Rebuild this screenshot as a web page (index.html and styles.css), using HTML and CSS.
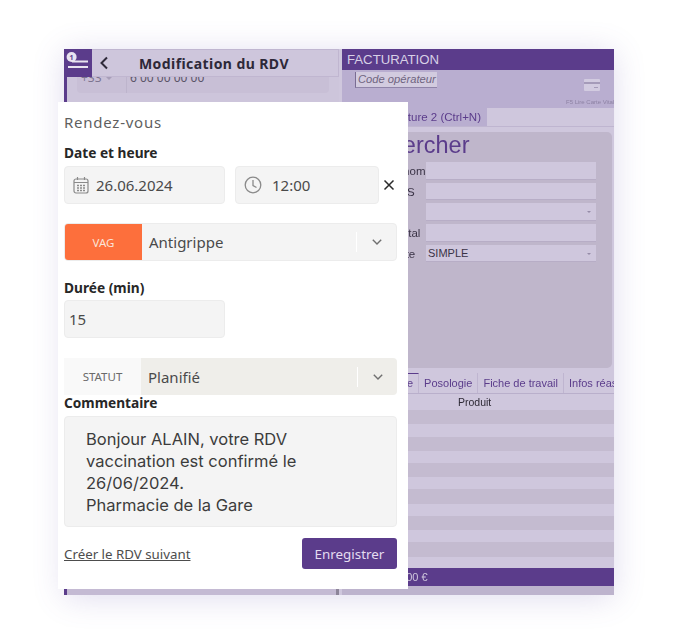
FILE: index.html
```html
<!DOCTYPE html>
<html lang="fr">
<head>
    <meta charset="UTF-8">
    <title>Modification du RDV</title>
    <link rel="stylesheet" href="styles.css">
</head>
<body>
<div class="app">
    <div class="left-pane">
        <div class="rdv-head">
            <div class="rdv-head__menu">
                <svg width="28" height="28" viewBox="0 0 28 28">
                    <circle cx="7.600" cy="8" r="5" fill="#e8e3f0"/>
                    <text x="7.600" y="10.500" class="rdv-head__count">1</text>
                    <path d="M8 12.500H24M4 18H24" stroke="#e8e3f0" stroke-width="2" fill="none"/>
                </svg>
            </div>
            <svg class="rdv-head__back" width="10" height="14" viewBox="0 0 10 14">
                <path d="M8 1.500 2.500 7 8 12.500" stroke="#2f2a3a" stroke-width="2" fill="none"/>
            </svg>
            <span class="rdv-head__title">Modification du RDV</span>
        </div>
        <div class="phone-row">
            <span class="phone-row__code">+33</span>
            <span class="phone-row__number">6 00 00 00 00</span>
        </div>
        <div class="left-pane__foot"></div>
    </div>

    <div class="right-pane">
        <div class="bill-head">FACTURATION</div>
        <div class="bill-tools">
            <span class="bill-tools__code">Code opérateur</span>
            <div class="bill-tools__card">
                <svg width="16" height="12" viewBox="0 0 16 12">
                    <rect width="16" height="12" rx="1" fill="#d2cbe0"/>
                    <rect y="3" width="16" height="2" fill="#a59bb9"/>
                    <rect x="10" y="8" width="4" height="1" fill="#a59bb9"/>
                </svg>
                <span>F5 Lire Carte Vitale</span>
            </div>
        </div>
        <div class="bill-tabs">
            <span class="bill-tabs__item">Facture 2 (Ctrl+N)</span>
        </div>
        <div class="search-card">
            <div class="search-card__title">Rechercher</div>
            <div class="search-form">
                <span class="search-form__label">Nom prénom</span>
                <span class="search-form__field"></span>
                <span class="search-form__label">N° de NSS</span>
                <span class="search-form__field"></span>
                <span class="search-form__label"></span>
                <span class="search-form__field search-form__field--select"></span>
                <span class="search-form__label">Code postal</span>
                <span class="search-form__field"></span>
                <span class="search-form__label">Type vente</span>
                <span class="search-form__field search-form__field--select">SIMPLE</span>
            </div>
        </div>
        <div class="line-tabs">
            <span class="line-tabs__item line-tabs__item--active">Ligne</span>
            <span class="line-tabs__item">Posologie</span>
            <span class="line-tabs__item">Fiche de travail</span>
            <span class="line-tabs__item">Infos réassort</span>
        </div>
        <div class="line-table__head">Produit</div>
        <div class="line-table"></div>
        <div class="total-bar">0,00 €</div>
        <div class="right-pane__foot"></div>
    </div>

    <div class="rdv-modal">
        <div class="rdv-modal__title">Rendez-vous</div>

        <div class="field-label field-label--date">Date et heure</div>
        <div class="date-row">
            <div class="input-box input-box--date">
                <svg width="16" height="18" viewBox="0 0 16 18" fill="none" stroke="#8a8a8a" stroke-width="1.200">
                    <rect x="1" y="3" width="14" height="14" rx="2"/>
                    <path d="M1 6.500H15M4.500 1V4M11.500 1V4"/>
                    <path d="M4 9.500H6M7 9.500H9M10 9.500H12M4 12H6M7 12H9M10 12H12M4 14.500H6M7 14.500H9M10 14.500H12" stroke-width="1.300"/>
                </svg>
                <span>26.06.2024</span>
            </div>
            <div class="input-box input-box--time">
                <svg width="18" height="18" viewBox="0 0 18 18" fill="none" stroke="#8a8a8a" stroke-width="1.300">
                    <circle cx="9" cy="9" r="7.800"/>
                    <path d="M9 4V9.500L12.500 11.500"/>
                </svg>
                <span>12:00</span>
            </div>
            <svg class="date-row__clear" width="12" height="12" viewBox="0 0 12 12">
                <path d="M1.500 1.500 10.500 10.500M10.500 1.500 1.500 10.500" stroke="#2b2b2b" stroke-width="1.500" fill="none"/>
            </svg>
        </div>

        <div class="select-box select-box--type">
            <span class="select-box__tag select-box__tag--vag">VAG</span>
            <span class="select-box__value">Antigrippe</span>
            <span class="select-box__arrow">
                <svg width="10" height="6" viewBox="0 0 10 6"><path d="M.8 .8 5 5 9.200 .8" stroke="#6f6f6f" stroke-width="1.400" fill="none"/></svg>
            </span>
        </div>

        <div class="field-label field-label--duration">Durée (min)</div>
        <div class="input-box input-box--duration">15</div>

        <div class="select-box select-box--status">
            <span class="select-box__tag select-box__tag--status">STATUT</span>
            <span class="select-box__value">Planifié</span>
            <span class="select-box__arrow">
                <svg width="10" height="6" viewBox="0 0 10 6"><path d="M.8 .8 5 5 9.200 .8" stroke="#6f6f6f" stroke-width="1.400" fill="none"/></svg>
            </span>
        </div>

        <div class="field-label field-label--comment">Commentaire</div>
        <div class="comment-box">
            Bonjour ALAIN, votre RDV<br>
            vaccination est confirmé le<br>
            26/06/2024.<br>
            Pharmacie de la Gare
        </div>

        <div class="rdv-modal__foot">
            <a href="#" class="next-link">Créer le RDV suivant</a>
            <button class="save-btn">Enregistrer</button>
        </div>
    </div>
</div>
</body>
</html>
```

FILE: styles.css
```css
html,
body {
    margin: 0;
    background: #fff;
}

body {
    padding: 49px 0 0 64px;
    height: 636px;
    box-sizing: border-box;
    overflow: hidden;
}

.app {
    position: relative;
    display: flex;
    width: 550px;
    height: 546px;
    background: #cfc7dd;
    box-shadow: 0 3px 30px rgba(100, 80, 170, 0.2);
    filter: blur(0.45px);
}

/* left pane, mostly hidden by the modal */
.left-pane {
    display: flex;
    flex-direction: column;
    width: 275px;
    border-left: 3px solid #5b3c8b;
    box-sizing: border-box;
    background: #cdc5db;
}

.rdv-head {
    position: relative;
    z-index: 1;
    display: flex;
    align-items: center;
    flex: none;
    height: 28px;
    margin-left: -3px;
    border: 1px solid #c0b6d0;
    border-left: 0;
    box-sizing: border-box;
    background: #cec6dc;
}

.rdv-head__menu {
    width: 28px;
    height: 28px;
    background: #5b3c8b;
    flex: none;
}

.rdv-head__count {
    font: 700 7px "Noto Sans", sans-serif;
    fill: #5b3c8b;
    text-anchor: middle;
}

.rdv-head__back {
    margin-left: 7px;
}

.rdv-head__title {
    margin-left: 30px;
    font: 700 14px "Noto Sans", sans-serif;
    letter-spacing: 0.42px;
    color: #2d2838;
}

.phone-row {
    display: flex;
    flex: none;
    height: 26px;
    margin: -10px 10px 0 10px;
    padding-top: 3px;
    box-sizing: border-box;
    background: #c8bfd6;
    border-radius: 0 0 4px 4px;
    font: 12px/16px "Noto Sans", sans-serif;
    color: #5c5569;
    overflow: hidden;
}

.phone-row__code {
    position: relative;
    width: 50px;
    padding-left: 4px;
    box-sizing: border-box;
    border-right: 1px solid #bdb4cc;
    color: #7d7590;
}

.phone-row__code::after {
    content: "";
    position: absolute;
    right: 14px;
    top: 7px;
    border: 3px solid transparent;
    border-top-color: #a79eb8;
}

.phone-row__number {
    padding-left: 3px;
}

.left-pane__foot {
    margin-top: auto;
    height: 6px;
    background: #c4bad3;
    border-right: 3px solid #8d8599;
}

/* right pane */
.right-pane {
    display: flex;
    flex-direction: column;
    width: 272px;
    margin-left: 3px;
    background: #cfc7dd;
    font-family: "Liberation Sans", sans-serif;
    overflow: hidden;
}

.bill-head {
    height: 21px;
    padding-left: 5px;
    background: #5b3c8b;
    font-size: 13.200px;
    line-height: 21px;
    color: #d8d0e6;
}

.bill-tools {
    display: flex;
    justify-content: space-between;
    height: 38px;
    background: #b9aed0;
}

.bill-tools__code {
    align-self: flex-start;
    margin: 2px 0 0 13px;
    width: 82px;
    height: 16px;
    border-left: 1px solid #7a6d93;
    border-bottom: 1px solid #8f84a8;
    box-sizing: border-box;
    padding-left: 2px;
    background: #d2cbdf;
    font-size: 11.200px;
    font-style: italic;
    line-height: 15px;
    color: #6f6480;
    white-space: nowrap;
}

.bill-tools__card {
    display: flex;
    flex-direction: column;
    width: 48px;
    padding-top: 9px;
    font-size: 6px;
    color: #8d82a3;
    white-space: nowrap;
}

.bill-tools__card svg {
    margin: 0 0 8px 18px;
}

.bill-tabs {
    display: flex;
    height: 18px;
    border-bottom: 1px solid #bfb5d0;
    background: #cfc7dd;
}

.bill-tabs__item {
    width: 145px;
    padding-right: 6px;
    box-sizing: border-box;
    background: #b9aed0;
    font-size: 11.500px;
    line-height: 18px;
    text-align: right;
    color: #5b3c8b;
}

.search-card {
    height: 236px;
    margin: 5px 2px 0 6px;
    padding-top: 1px;
    box-sizing: border-box;
    background: #bfb6cb;
    border-radius: 5px;
}

.search-card__title {
    font-size: 23.500px;
    line-height: 24px;
    color: #5b3c8b;
}

.search-form {
    display: grid;
    grid-template-columns: 67px 170px;
    grid-auto-rows: 17.500px;
    row-gap: 3.200px;
    column-gap: 0;
    margin-top: 5px;
    padding-left: 11px;
    font-size: 11.500px;
    white-space: nowrap;
}

.search-form__label {
    line-height: 18px;
    color: #3a3346;
}

.search-form__field {
    padding-left: 2px;
    background: #cfc7dd;
    border-bottom: 1px solid #b7adc6;
    font-size: 11px;
    line-height: 17px;
    color: #3a3346;
}

.search-form__field--select {
    position: relative;
}

.search-form__field--select::after {
    content: "";
    position: absolute;
    right: 5px;
    top: 8px;
    border: 2px solid transparent;
    border-top-color: #968ca8;
}

.line-tabs {
    display: flex;
    justify-content: flex-end;
    height: 20px;
    margin-top: 5px;
    border-bottom: 1px solid #b9afcb;
    font-size: 11px;
    color: #5b3c8b;
    white-space: nowrap;
}

.line-tabs__item {
    flex: none;
    padding: 2px 5px 0 5px;
    border-right: 1px solid #bfb5d0;
    line-height: 17px;
}

.line-tabs__item--active {
    border-top: 1px solid #5b3c8b;
    padding-top: 1px;
}

.line-tabs__item:last-child {
    width: 40px;
    overflow: hidden;
    border-right: 0;
}

.line-table__head {
    flex: none;
    height: 16px;
    padding-left: 116px;
    font-size: 10.500px;
    line-height: 16px;
    color: #2e2a36;
}

.line-table {
    flex: 1;
    background: repeating-linear-gradient(#c4bbd0 0 14px, #cfc7dd 14px 26.500px);
}

.total-bar {
    height: 18px;
    padding-left: 55px;
    background: #5b3c8b;
    font-size: 11px;
    line-height: 18px;
    color: #cfc7dd;
}

.right-pane__foot {
    height: 9px;
    background: #bdb3cd;
}

/* modal on top of both panes */
.rdv-modal {
    position: absolute;
    left: -6px;
    top: 53px;
    width: 350px;
    height: 487px;
    padding: 10px 11px 0 6px;
    box-sizing: border-box;
    background: #fff;
    font-family: "Noto Sans", sans-serif;
    color: #2a2a2a;
}

.rdv-modal__title {
    font-size: 15px;
    line-height: 20px;
    letter-spacing: 0.75px;
    color: #5f5f5f;
}

.field-label {
    font-size: 13.700px;
    font-weight: 700;
    line-height: 18px;
    color: #272727;
}

.field-label--date {
    margin-top: 12px;
}

.field-label--duration {
    margin-top: 18px;
}

.field-label--comment {
    height: 17px;
    line-height: 16px;
}

.date-row {
    display: flex;
    align-items: center;
    gap: 10px;
    margin-top: 4px;
}

.date-row svg {
    flex: none;
}

.input-box {
    display: flex;
    align-items: center;
    flex: none;
    height: 38px;
    box-sizing: border-box;
    background: #f4f4f4;
    border: 1px solid #ececec;
    border-radius: 4px;
    font-size: 15px;
    color: #4a4a4a;
}

.input-box--date {
    gap: 7px;
    width: 161px;
    padding-left: 8px;
}

.input-box--time {
    gap: 10px;
    width: 144px;
    padding-left: 8px;
}

.input-box--duration {
    width: 161px;
    margin-top: 3px;
    padding-left: 4px;
}

.date-row__clear {
    margin-left: -6px;
}

.select-box {
    display: flex;
    align-items: center;
    box-sizing: border-box;
    border-radius: 4px;
    font-size: 15px;
    color: #4a4a4a;
}

.select-box--type {
    height: 38px;
    margin-top: 19px;
    background: #f4f4f4;
    border: 1px solid #ececec;
}

.select-box--status {
    height: 37px;
    margin-top: 20px;
    background: #efeeea;
}

.select-box__tag {
    display: flex;
    align-items: center;
    justify-content: center;
    align-self: stretch;
    flex: none;
    width: 77px;
    font-size: 11.500px;
}

.select-box__tag--vag {
    background: #fd6f3c;
    color: #fbe3d8;
    border-radius: 3px 0 0 3px;
}

.select-box__tag--status {
    background: #f9f9f9;
    color: #6a6a6a;
}

.select-box__value {
    flex: 1;
    padding-left: 7px;
}

.select-box__arrow {
    display: flex;
    align-items: center;
    justify-content: center;
    width: 39px;
    height: 20px;
    border-left: 1px solid #fff;
}

.comment-box {
    height: 111px;
    margin-top: 4px;
    padding: 11px 0 0 21px;
    box-sizing: border-box;
    background: #f4f4f4;
    border: 1px solid #ececec;
    border-radius: 4px;
    font-family: Inter, sans-serif;
    font-size: 16.500px;
    line-height: 22px;
    color: #3c3c3c;
}

.rdv-modal__foot {
    display: flex;
    align-items: center;
    justify-content: space-between;
    margin-top: 11px;
}

.next-link {
    font-size: 13.300px;
    color: #4d4d4d;
}

.save-btn {
    width: 95px;
    height: 31px;
    padding: 0;
    border: 0;
    border-radius: 3px;
    background: #5b3c8b;
    font-family: "Noto Sans", sans-serif;
    font-size: 13.400px;
    color: #e4dcf0;
}
```
